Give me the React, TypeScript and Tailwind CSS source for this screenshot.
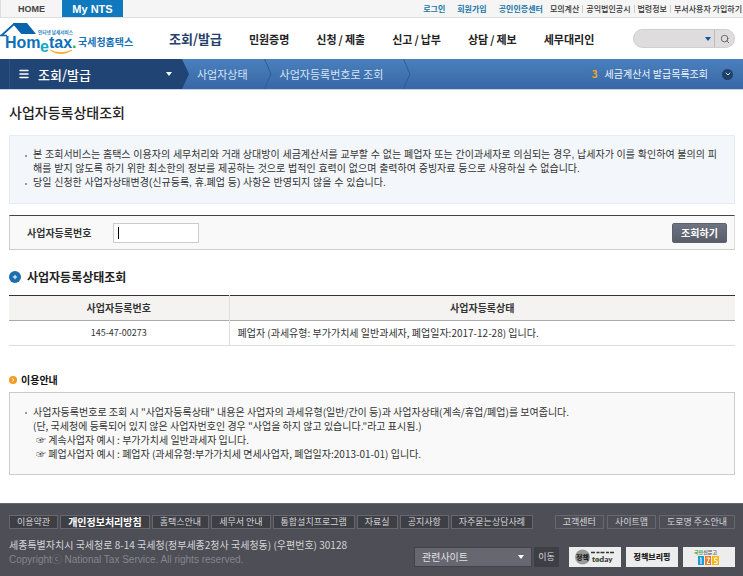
import { ReactNode } from 'react'
import { ChevronDown, ChevronRight, Menu, Plus, Search } from 'lucide-react'

const mainMenu = [['민원증명'], ['신청', '제출'], ['신고', '납부'], ['상담', '제보'], ['세무대리인']]
const memberLinks = ['로그인', '회원가입', '공인인증센터']
const utilLinks = ['모의계산', '공익법인공시', '법령정보', '부서사용자 가입하기']
const helpLinks = ['고객센터', '사이트맵', '도로명 주소안내']
const footerLinks = [
  { label: '이용약관' },
  { label: '개인정보처리방침', strong: true },
  { label: '홈택스안내' },
  { label: '세무서 안내' },
  { label: '통합설치프로그램' },
  { label: '자료실' },
  { label: '공지사항' },
  { label: '자주묻는상담사례' },
]

function Logo() {
  return (
    <svg width="138" height="39" viewBox="0 0 138 39" role="img" aria-label="Hometax 국세청홈택스">
      <path d="M13 4H27L36 15H22Z" fill="#0a63ae" />
      <path d="M1.500 16.500L14 5L22 14.500" fill="none" stroke="#0a63ae" strokeWidth="1.800" />
      <path d="M0 16.500H7" stroke="#0a63ae" strokeWidth="1.500" />
      <g fontFamily="'Noto Sans CJK KR', sans-serif" fontWeight="700">
        <text x="38" y="14.500" fontSize="4.600" fill="#2a7fc0">인터넷 납세서비스</text>
        <text x="78" y="27" fontSize="10" fill="#1872b8">국세청홈택스</text>
      </g>
      <g fontFamily="'Liberation Sans', sans-serif" fontSize="16" fontWeight="700" fill="#0d70b8">
        <text x="5" y="29">Hom</text>
        <text x="40" y="33" fill="#15a5c9">e</text>
        <text x="49" y="29">tax</text>
        <text x="72" y="29" fill="#3aa845">.</text>
      </g>
      <path d="M50 31Q61 38.500 72 31Q61 36 50 31Z" fill="#f5a623" stroke="#f5a623" strokeWidth="0.6" />
    </svg>
  )
}

function CrumbArrow() {
  return (
    <svg width="8" height="30" viewBox="0 0 8 30" aria-hidden="true">
      <path d="M0.500 0L7 15L0.500 30" fill="none" stroke="#2b5d98" />
    </svg>
  )
}

function NoticeItem({ children }: { children: ReactNode }) {
  return (
    <li className="flex gap-[6px]">
      <span className="mt-[7px] size-[2px] shrink-0 bg-[#999]" />
      <div>{children}</div>
    </li>
  )
}

function TopBar() {
  return (
    <div className="flex h-[18px] items-stretch border-b border-[#dedede] bg-[#f5f5f5]">
      <a href="#home" className="flex w-[62px] items-center justify-center border-l border-[#ddd] font-['Liberation_Sans',sans-serif] text-[9px] font-bold text-[#444]">
        HOME
      </a>
      <a href="#mynts" className="flex w-[61px] items-center justify-center bg-[#1078bd] font-['Liberation_Sans',sans-serif] text-[11px] font-bold text-white">
        My NTS
      </a>
      <div className="ml-auto flex items-center text-[8px]">
        <div className="flex gap-3 font-bold text-[#1b75a8]">
          {memberLinks.map((label) => (
            <a key={label} href="#member">{label}</a>
          ))}
        </div>
        <div className="ml-1 flex divide-x divide-[#ccc] font-medium leading-[8px] text-[#333]">
          {utilLinks.map((label) => (
            <a key={label} href="#util" className="px-[3px] last:pr-px">{label}</a>
          ))}
        </div>
      </div>
    </div>
  )
}

function Header() {
  return (
    <header className="flex h-[41px] items-center bg-white pr-2">
      <Logo />
      <nav className="ml-[31px] flex items-center gap-[27px] whitespace-nowrap text-[11px] font-bold text-[#222]">
        <a href="#search" className="text-[13px] text-[#25406b]">조회/발급</a>
        {mainMenu.map(([first, second]) => (
          <a key={first} href="#menu">
            {first}
            {second && <span className="px-[2px]">/</span>}
            {second}
          </a>
        ))}
      </nav>
      <form className="ml-auto flex h-[19px] w-[102px] items-center rounded-full border border-[#cfcdce] bg-[#dedcdd]">
        <input type="text" aria-label="통합검색" className="ml-2 w-full min-w-0 flex-1 bg-transparent text-[10px] outline-none" />
        <button type="button" aria-label="검색어 목록" className="px-[3px]">
          <svg width="6" height="4" viewBox="0 0 6 4"><path d="M0 0H6L3 4Z" fill="#0b55a5" /></svg>
        </button>
        <button type="button" aria-label="검색" className="flex h-full w-5 items-center justify-center border-l border-[#bbb]">
          <Search size={10} color="#555" />
        </button>
      </form>
    </header>
  )
}

function LocationBar() {
  return (
    <div className="flex h-[31px] border-b border-[#c5d5e8] bg-linear-to-b from-[#4a80bd] to-[#3867a6] text-[11px] text-[#d5e4f5]">
      <button type="button" className="flex w-[182px] items-center bg-[#204574] text-white">
        <span className="h-full w-[10px] border-r border-[#2b5382]" />
        <Menu size={12} strokeWidth={3} className="ml-2" />
        <span className="ml-2 text-[13px] leading-[13px] font-medium">조회/발급</span>
        <svg width="6" height="4" viewBox="0 0 6 4" className="mr-[10px] ml-auto"><path d="M0 0H6L3 4Z" fill="#fff" /></svg>
      </button>
      <svg width="7" height="30" viewBox="0 0 7 30" aria-hidden="true">
        <path d="M0 0L7 15L0 30Z" fill="#204574" />
      </svg>
      <nav className="flex items-center">
        <a href="#status" className="pr-4 pl-2">사업자상태</a>
        <CrumbArrow />
        <a href="#number" className="pr-5 pl-2">사업자등록번호로 조회</a>
        <CrumbArrow />
      </nav>
      <div className="ml-auto flex items-center pr-[10px] text-[10px]">
        <span className="font-bold text-[#f5a51d]">3</span>
        <a href="#recent" className="ml-[7px] text-[#eef4fb]">세금계산서 발급목록조회</a>
        <button type="button" aria-label="펼치기" className="ml-[14px] flex size-[11px] items-center justify-center rounded-full bg-[#204068]">
          <ChevronDown size={8} strokeWidth={3} />
        </button>
      </div>
    </div>
  )
}

function Footer() {
  return (
    <footer className="mt-7 border-t border-[#66666c] bg-[#4e4e56] pt-[11px] pr-2 pb-[10px] pl-[9px] text-[#d5d5d8]">
      <div className="flex justify-between whitespace-nowrap text-[9px] leading-[12px]">
        <div className="flex gap-[2px]">
          {footerLinks.map(({ label, strong }) => (
            <a
              key={label}
              href="#info"
              className={`border border-[#67676f] bg-[#3e3e45] px-[7px] ${strong ? 'text-[10px] font-bold text-white' : ''}`}
            >
              {label}
            </a>
          ))}
        </div>
        <div className="flex gap-[3px]">
          {helpLinks.map((label) => (
            <a key={label} href="#help" className="border border-[#67676f] px-[7px]">{label}</a>
          ))}
        </div>
      </div>
      <div className="mt-2 flex items-end justify-between">
        <div className="self-start text-[10px] leading-[15px]">
          <p>세종특별자치시 국세청로 8-14 국세청(정부세종2청사 국세청동) (우편번호) 30128</p>
          <p className="font-['Liberation_Sans','Noto_Sans_CJK_KR',sans-serif] text-[#85858c]">Copyrightⓒ National Tax Service. All rights reserved.</p>
        </div>
        <div className="mt-[9px] flex h-5 text-[10px]">
          <div className="relative w-[118px]">
            <select aria-label="관련사이트" className="h-full w-full appearance-none border border-[#42424a] bg-[#676771] px-[7px] text-[10px] text-[#e0e0e4]">
              <option>관련사이트</option>
            </select>
            <svg width="6" height="4" viewBox="0 0 6 4" className="pointer-events-none absolute top-2 right-2"><path d="M0 0H6L3 4Z" fill="#fff" /></svg>
          </div>
          <button type="button" className="ml-[2px] w-[25px] bg-[#3e3e45] text-[9px]">이동</button>
          <div className="ml-[10px] flex gap-[5px]">
            <a href="#today" className="w-[52px] bg-[#ededed]">
              <svg width="52" height="20" viewBox="0 0 52 20" role="img" aria-label="정책 today">
                <circle cx="13.500" cy="10" r="7.500" fill="#9a9a9a" />
                <text x="7" y="12.800" fontSize="7" fontWeight="900" fill="#222" fontFamily="'Noto Sans CJK KR', sans-serif">정책</text>
                <path d="M22 5.500H45" stroke="#333" strokeWidth="1.600" strokeDasharray="4 1.500 3 1" />
                <text x="23" y="15" fontSize="8" fontWeight="900" fill="#333" fontFamily="Lato, sans-serif">today</text>
                <circle cx="28.500" cy="13" r="1.200" fill="#4d9c45" />
              </svg>
            </a>
            <a href="#briefing" className="flex w-[52px] items-center justify-center bg-[#ededed] text-[8px] font-black text-[#222]">
              정책브리핑
            </a>
            <a href="#epeople" className="w-[52px] bg-[#ededed]">
              <svg width="52" height="20" viewBox="0 0 52 20" role="img" aria-label="국민신문고 110">
                <text x="11" y="7" fontSize="5" fontWeight="700" fill="#666" fontFamily="'Noto Sans CJK KR', sans-serif"><tspan fill="#45a045">국민</tspan>신문고</text>
                <rect x="15" y="9" width="6" height="9" fill="#1c9ad6" />
                <rect x="22" y="9" width="6" height="9" fill="#ee7b22" />
                <rect x="29" y="9" width="7" height="9" fill="#f5b81c" />
                <path d="M17 11H18V17M23.500 11H26.500L24 16.500H27M34.500 11H31.500V13.500Q35 13 34 16.500H31" fill="none" stroke="#fff" />
              </svg>
            </a>
          </div>
        </div>
      </div>
    </footer>
  )
}

export default function App() {
  return (
    <div className="bg-white font-['Noto_Sans_CJK_KR',sans-serif] text-[10px] leading-[14px] text-[#333]">
      <TopBar />
      <Header />
      <LocationBar />
      <main className="pr-2 pl-[9px]">
        <h1 className="pt-3 text-[14px] leading-[20px] font-medium text-[#222]">사업자등록상태조회</h1>

        <ul className="mt-[13px] border border-[#e6ebf1] bg-[#f3f7fc] pt-3 pr-[15px] pb-[13px] pl-[15px] font-['Liberation_Sans','Noto_Sans_CJK_KR',sans-serif] break-all">
          <NoticeItem>
            본 조회서비스는 홈택스 이용자의 세무처리와 거래 상대방이 세금계산서를 교부할 수 없는 폐업자 또는 간이과세자로 의심되는 경우, 납세자가 이를 확인하여 불의의 피해를 받지 않도록 하기 위한 최소한의 정보를 제공하는 것으로 법적인 효력이 없으며 출력하여 증빙자료 등으로 사용하실 수 없습니다.
          </NoticeItem>
          <NoticeItem>당일 신청한 사업자상태변경(신규등록, 휴.폐업 등) 사항은 반영되지 않을 수 있습니다.</NoticeItem>
        </ul>

        <form className="mt-[11px] flex h-[35px] items-center border border-t-[#444] border-r-[#ddd] border-b-[#ccc] border-l-[#ccc] bg-[#f9f9f9] pr-[7px] pl-[17px]">
          <label htmlFor="bsno" className="text-[10px] font-bold">사업자등록번호</label>
          <div className="relative ml-[22px]">
            <input id="bsno" type="text" className="h-5 w-[86px] border border-[#ccc] bg-white px-1 text-[10px] outline-none" />
            <span className="pointer-events-none absolute top-1 left-[5px] h-3 w-px bg-black" />
          </div>
          <button type="button" className="ml-auto h-5 w-[55px] rounded-[2px] border border-[#5c616c] bg-linear-to-b from-[#6d7380] to-[#585d69] text-[10px] leading-[18px] font-bold text-white">
            조회하기
          </button>
        </form>

        <h2 className="mt-[17px] flex items-center gap-[6px] text-[12px] leading-[20px] font-bold text-[#222]">
          <span className="flex size-3 items-center justify-center rounded-full bg-[#1b6fae] text-white">
            <Plus size={6} strokeWidth={4} />
          </span>
          사업자등록상태조회
        </h2>

        <table className="mt-2 w-full table-fixed border-collapse">
          <thead>
            <tr className="h-[25px] border-t border-b border-t-[#333] border-b-[#aaa] bg-[#f4f3f1]">
              <th scope="col" className="w-[220px] border-r border-[#ddd] font-bold">사업자등록번호</th>
              <th scope="col" className="font-bold">사업자등록상태</th>
            </tr>
          </thead>
          <tbody>
            <tr className="h-[25px] border-b border-[#ddd]">
              <td className="border-r border-[#ddd] text-center text-[9px]">145-47-00273</td>
              <td className="px-2">폐업자 (과세유형: 부가가치세 일반과세자, 폐업일자:2017-12-28) 입니다.</td>
            </tr>
          </tbody>
        </table>

        <h3 className="mt-[27px] flex items-center gap-1 text-[10px] font-bold text-[#111]">
          <span className="flex size-2 items-center justify-center rounded-full bg-[#f39a21] text-white">
            <ChevronRight size={6} strokeWidth={4} />
          </span>
          이용안내
        </h3>
        <ul className="mt-[5px] border border-[#ccc] bg-[#f9f9f9] px-[15px] pt-3 pb-[13px]">
          <NoticeItem>
            <p>사업자등록번호로 조회 시 "사업자등록상태" 내용은 사업자의 과세유형(일반/간이 등)과 사업자상태(계속/휴업/폐업)를 보여줍니다.</p>
            <p>(단, 국세청에 등록되어 있지 않은 사업자번호인 경우 "사업을 하지 않고 있습니다."라고 표시됨.)</p>
            <p className="pl-[3px]">☞ 계속사업자 예시 : 부가가치세 일반과세자 입니다.</p>
            <p className="pl-[3px]">☞ 폐업사업자 예시 : 폐업자 (과세유형:부가가치세 면세사업자, 폐업일자:2013-01-01) 입니다.</p>
          </NoticeItem>
        </ul>
      </main>
      <Footer />
    </div>
  )
}
